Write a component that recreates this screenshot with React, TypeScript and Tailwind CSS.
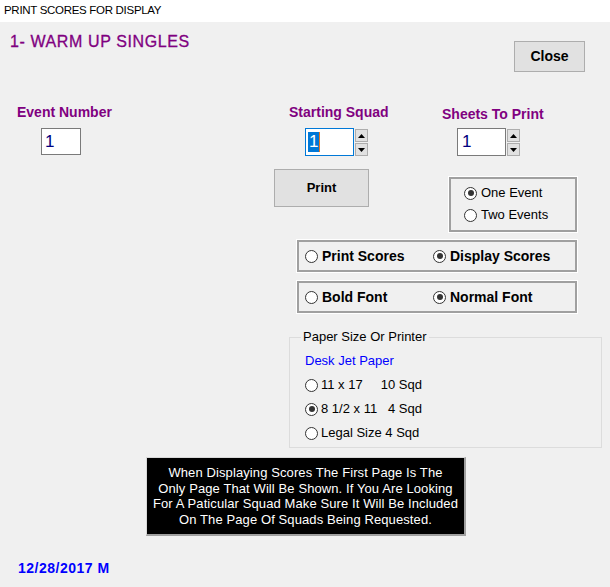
import React from 'react'

const sans = { fontFamily: '"Liberation Sans", Arial, sans-serif' }

const Radio = ({ checked }: { checked?: boolean }) => (
  <span className="flex h-[13px] w-[13px] shrink-0 items-center justify-center rounded-full border border-[#333333] bg-white">
    {checked && <span className="h-[6px] w-[6px] rounded-full bg-[#333333]" />}
  </span>
)

const Spinner = () => (
  <div className="ml-[1px] flex flex-col gap-[1px] pt-[1px]">
    <button className="flex h-[13px] w-[13px] items-center justify-center border border-[#adadad] bg-[#e1e1e1]">
      <svg width="7" height="4" viewBox="0 0 7 4">
        <path d="M3.5 0 L7 4 L0 4 Z" fill="#000" />
      </svg>
    </button>
    <button className="flex h-[13px] w-[13px] items-center justify-center border border-[#adadad] bg-[#e1e1e1]">
      <svg width="7" height="4" viewBox="0 0 7 4">
        <path d="M0 0 L7 0 L3.5 4 Z" fill="#000" />
      </svg>
    </button>
  </div>
)

const App = () => {
  return (
    <main className="h-[587px] w-[610px] overflow-hidden bg-[#f0f0f0] text-black" style={sans}>
      <header className="flex h-[22px] items-center bg-white pl-[4px] text-[11.5px] tracking-[-0.3px]">
        PRINT SCORES FOR DISPLAY
      </header>

      <section className="flex h-[50px] items-start">
        <h1 className="ml-[10px] mt-[10px] text-[16px] leading-[20px] tracking-[0.6px] text-[#800080] [-webkit-text-stroke:0.3px_#800080]">
          1- WARM UP SINGLES
        </h1>
        <button className="ml-auto mr-[25px] mt-[19px] h-[31px] w-[71px] border border-[#adadad] bg-[#e1e1e1] text-[14px] font-bold">
          Close
        </button>
      </section>

      <section className="mt-[32px] flex items-start text-[14px] font-bold leading-[16px] text-[#800080]">
        <div className="ml-[17px] w-[272px]">
          <div>Event Number</div>
          <div className="ml-[24px] mt-[8px] flex h-[27px] w-[40px] items-center border border-[#7a7a7a] bg-white pl-[3px] text-[17px] font-normal text-[#000080]">
            1
          </div>
        </div>
        <div className="w-[153px]">
          <div>Starting Squad</div>
          <div className="ml-[16px] mt-[8px] flex">
            <div className="flex h-[28px] w-[49px] items-center border border-[#0078d7] bg-white pl-[2px]">
              <span className="flex h-[20px] items-center bg-[#0078d7] px-[1px] text-[17px] font-normal text-white">1</span>
              <span className="h-[20px] w-[1px] bg-[#e87722]" />
            </div>
            <Spinner />
          </div>
        </div>
        <div>
          <div className="mt-[2px]">Sheets To Print</div>
          <div className="ml-[15px] mt-[6px] flex">
            <div className="flex h-[28px] w-[49px] items-center border border-[#7a7a7a] bg-white pl-[4px] text-[17px] font-normal text-[#000080]">
              1
            </div>
            <Spinner />
          </div>
        </div>
      </section>

      <section className="mt-[13px] flex items-start">
        <button className="ml-[274px] h-[38px] w-[95px] border border-[#adadad] bg-[#e1e1e1] text-[13px] font-bold">
          Print
        </button>
        <div className="ml-[80px] mt-[8px] flex h-[55px] w-[128px] flex-col gap-[6px] border-2 border-[#a0a0a0] pl-[13px] pt-[6px] text-[13px] shadow-[0_0_0_1px_#ffffff]">
          <label className="flex items-center gap-[4px] leading-[16px]">
            <Radio checked />
            One Event
          </label>
          <label className="flex items-center gap-[4px] leading-[16px]">
            <Radio />
            Two Events
          </label>
        </div>
      </section>

      <div className="ml-[297px] mt-[8px] flex h-[32px] w-[280px] items-center border-2 border-[#a0a0a0] pl-[6px] text-[14px] font-bold shadow-[0_0_0_1px_#ffffff]">
        <label className="flex w-[128px] items-center gap-[4px]">
          <Radio />
          Print Scores
        </label>
        <label className="flex items-center gap-[4px]">
          <Radio checked />
          Display Scores
        </label>
      </div>

      <div className="ml-[297px] mt-[9px] flex h-[32px] w-[280px] items-center border-2 border-[#a0a0a0] pl-[6px] text-[14px] font-bold shadow-[0_0_0_1px_#ffffff]">
        <label className="flex w-[128px] items-center gap-[4px]">
          <Radio />
          Bold Font
        </label>
        <label className="flex items-center gap-[4px]">
          <Radio checked />
          Normal Font
        </label>
      </div>

      <fieldset className="ml-[289px] mt-[16px] h-[119px] w-[313px] border border-[#dcdcdc] pl-[15px] text-[13px] leading-[16px]">
        <legend className="-ml-[4px] px-[2px]">Paper Size Or Printer</legend>
        <div className="mt-[8px] text-[#0000ff]">Desk Jet Paper</div>
        <div className="mt-[8px] flex flex-col gap-[8px]">
          <label className="flex items-center gap-[3px]">
            <Radio />
            <span className="whitespace-pre">11 x 17     10 Sqd</span>
          </label>
          <label className="flex items-center gap-[3px]">
            <Radio checked />
            <span className="whitespace-pre">8 1/2 x 11   4 Sqd</span>
          </label>
          <label className="flex items-center gap-[3px]">
            <Radio />
            <span>Legal Size 4 Sqd</span>
          </label>
        </div>
      </fieldset>

      <div className="ml-[146px] mt-[9px] flex h-[79px] w-[320px] flex-col items-center justify-center border-b-2 border-l border-r-2 border-t border-b-[#a0a0a0] border-l-[#d8d8d8] border-r-[#a0a0a0] border-t-[#d8d8d8] bg-black text-center text-[13px] leading-[15.5px] tracking-[0.1px] text-white">
        <p>When Displaying Scores The First Page Is The</p>
        <p>Only Page That Will Be Shown. If You Are Looking</p>
        <p>For A Paticular Squad Make Sure It Will Be Included</p>
        <p>On The Page Of Squads Being Requested.</p>
      </div>

      <div className="ml-[18px] mt-[22px] text-[14px] font-bold tracking-[0.5px] text-[#0000ff]">12/28/2017 M</div>
    </main>
  )
}

export default App
